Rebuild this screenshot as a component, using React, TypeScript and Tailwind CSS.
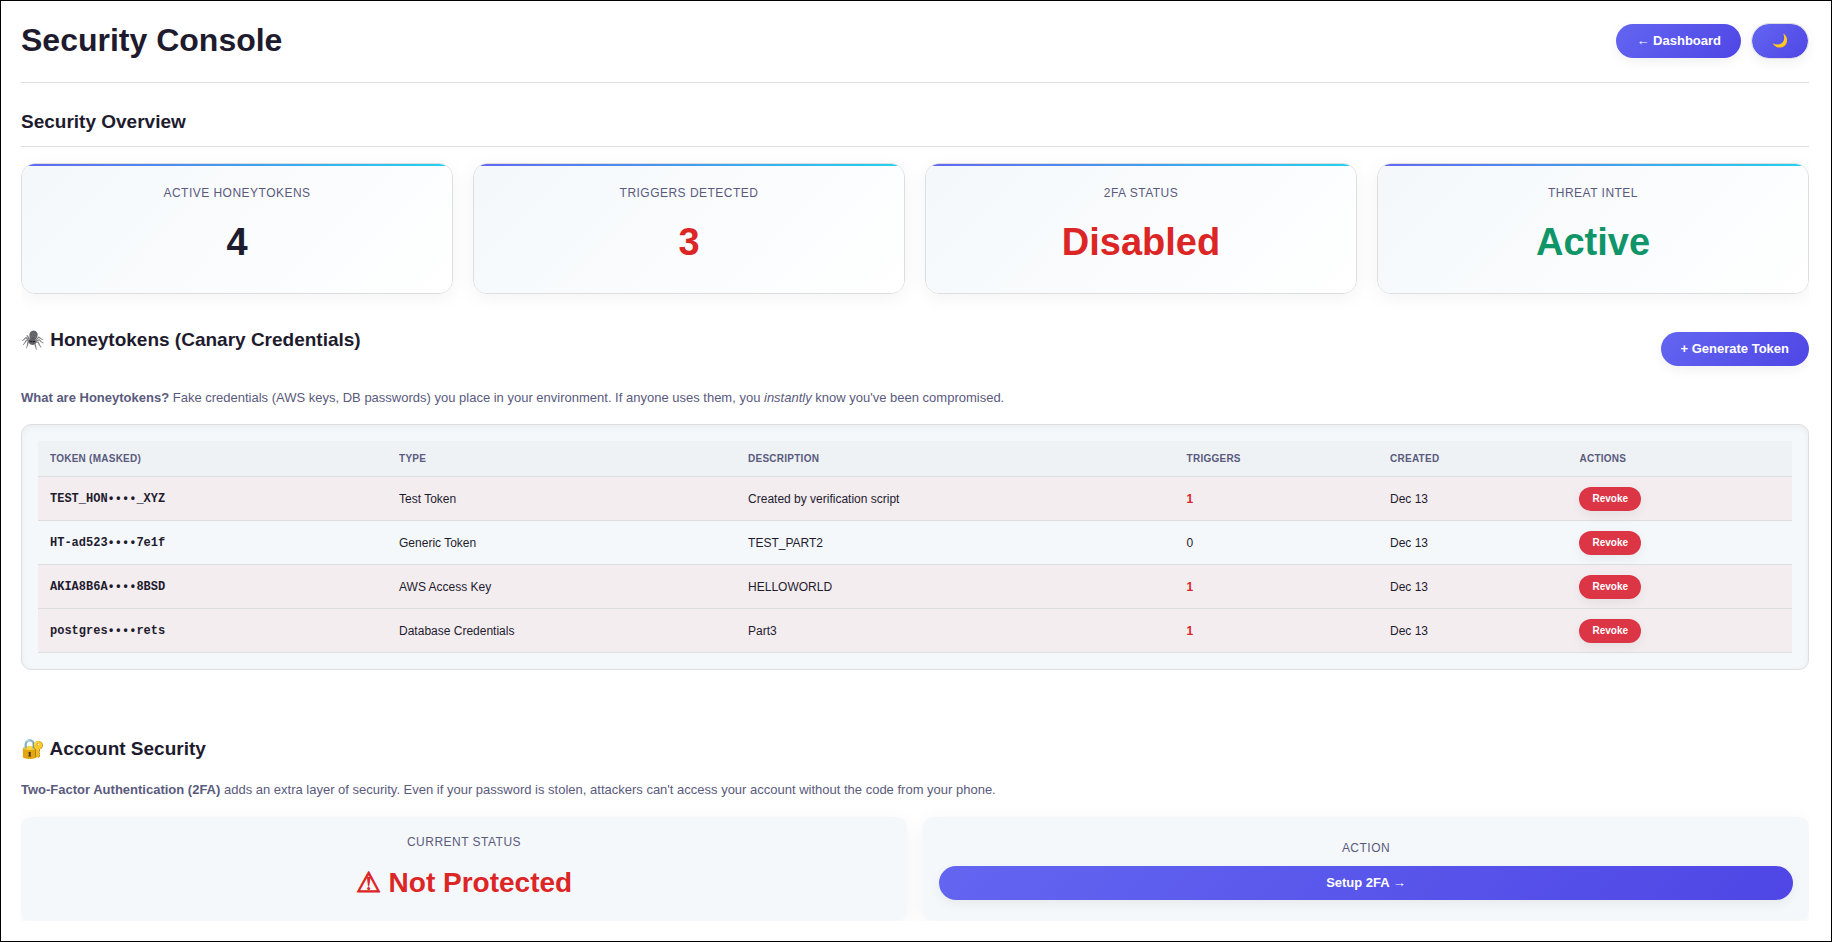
import { clsx } from "clsx";

const STATS = [
  { label: "Active Honeytokens", value: "4", color: "text-[#1e1b2e]" },
  { label: "Triggers Detected", value: "3", color: "text-[#dc2626]" },
  { label: "2FA Status", value: "Disabled", color: "text-[#dc2626]" },
  { label: "Threat Intel", value: "Active", color: "text-[#0f9568]" },
];

const COLUMNS = [
  { label: "Token (Masked)", width: "w-[19.9%]" },
  { label: "Type", width: "w-[19.9%]" },
  { label: "Description", width: "w-[25%]" },
  { label: "Triggers", width: "w-[11.6%]" },
  { label: "Created", width: "w-[10.8%]" },
  { label: "Actions", width: "w-[12.8%]" },
];

const TOKENS = [
  { token: "TEST_HON••••_XYZ", type: "Test Token", description: "Created by verification script", triggers: 1, created: "Dec 13" },
  { token: "HT-ad523••••7e1f", type: "Generic Token", description: "TEST_PART2", triggers: 0, created: "Dec 13" },
  { token: "AKIA8B6A••••8BSD", type: "AWS Access Key", description: "HELLOWORLD", triggers: 1, created: "Dec 13" },
  { token: "postgres••••rets", type: "Database Credentials", description: "Part3", triggers: 1, created: "Dec 13" },
];

const BUTTON =
  "cursor-pointer rounded-full bg-linear-135/srgb from-[#6366f1] to-[#4f46e5] px-5 text-[13px] font-semibold text-white shadow-[0_4px_12px_rgba(0,0,0,0.06)]";

const LABEL = "text-xs uppercase tracking-[0.04em] text-[#5a5a7d]";

const HEADING = "text-[19px] leading-[30px] font-semibold";

export default function App() {
  return (
    <div
      className="min-h-screen border border-black bg-white pr-[22px] pb-[19px] pl-5 text-[#1e1b2e]"
      style={{ fontFamily: '"Liberation Sans", Arial, sans-serif' }}
    >
      <header className="flex items-center justify-between border-b border-[#dedede] py-5">
        <h1 className="pb-[3px] text-[32px] leading-[38px] font-bold">Security Console</h1>
        <div className="flex items-center gap-2.5 pb-0.5">
          <a href="#dashboard" className={clsx(BUTTON, "flex h-[34px] items-center")}>
            ← Dashboard
          </a>
          <button type="button" aria-label="Toggle theme" className={clsx(BUTTON, "h-9 border border-[#dedede] bg-clip-padding")}>
            🌙
          </button>
        </div>
      </header>

      <main className="overflow-hidden pt-6">
        <section>
          <h2 className={clsx(HEADING, "mb-4 border-b border-[#dedede] pb-[9px]")}>Security Overview</h2>
          <div className="grid grid-cols-4 gap-5">
            {STATS.map((s) => (
              <div
                key={s.label}
                className="rounded-[14px] border border-[#dedede] shadow-[0_4px_20px_rgba(0,0,0,0.05)]"
              >
                <div className="relative overflow-hidden rounded-[13px] bg-linear-135/srgb from-[#f4f8fb] to-white py-5 text-center">
                  <div className="absolute inset-x-0 top-0 h-0.5 bg-linear-to-r/srgb from-[#6366f1] to-[#22d3ee]" />
                  <p className={clsx(LABEL, "leading-[18px]")}>{s.label}</p>
                  <p className={clsx("mt-2.5 text-[38px] leading-[61px] font-bold", s.color)}>{s.value}</p>
                </div>
              </div>
            ))}
          </div>
        </section>

        {/* Honeytokens */}
        <section className="mt-[31px]">
          <div className="flex items-center justify-between">
            <h2 className={clsx(HEADING, "mb-[17px]")}>🕷️ Honeytokens (Canary Credentials)</h2>
            <button type="button" className={clsx(BUTTON, "h-[34px]")}>
              + Generate Token
            </button>
          </div>
          <p className="my-4 text-[13px] leading-[20px] text-[#5a5a7d]">
            <strong>What are Honeytokens?</strong> Fake credentials (AWS keys, DB passwords) you place in your
            environment. If anyone uses them, you <em>instantly</em> know you've been compromised.
          </p>

          <div className="rounded-[10px] border border-[#dedede] bg-[#f4f8fb] p-4 shadow-[inset_0_2px_6px_rgba(0,0,0,0.05)]">
            <table className="w-full table-fixed border-separate border-spacing-0 text-left text-xs">
              <thead>
                <tr className="h-9 bg-[#eef2f5]">
                  {COLUMNS.map((c) => (
                    <th
                      key={c.label}
                      className={clsx(
                        "border-b border-[#dedede] px-3 text-[10px] font-semibold tracking-wide text-[#5a5a7d] uppercase",
                        c.width
                      )}
                    >
                      {c.label}
                    </th>
                  ))}
                </tr>
              </thead>
              <tbody className="[&_td]:border-b [&_td]:border-[#dedede] [&_td]:px-3">
                {TOKENS.map((t) => (
                  <tr key={t.token} className={clsx("h-11", t.triggers > 0 && "bg-[#f4edf0]")}>
                    <td className="font-['Liberation_Mono',monospace] font-bold">{t.token}</td>
                    <td>{t.type}</td>
                    <td>{t.description}</td>
                    <td className={clsx(t.triggers > 0 && "font-bold text-[#dc2626]")}>{t.triggers}</td>
                    <td>{t.created}</td>
                    <td>
                      <button
                        type="button"
                        className="block h-6 cursor-pointer rounded-full bg-[#dc3545] px-[13px] text-[10px] font-semibold text-white shadow-[0_4px_12px_rgba(0,0,0,0.06)]"
                      >
                        Revoke
                      </button>
                    </td>
                  </tr>
                ))}
              </tbody>
            </table>
          </div>
        </section>

        {/* Two-factor setup */}
        <section className="mt-16">
          <h2 className={HEADING}>🔐 Account Security</h2>
          <p className="mt-4 mb-[17px] text-[13px] leading-[20px] text-[#5a5a7d]">
            <strong>Two-Factor Authentication (2FA)</strong> adds an extra layer of security. Even if your password is
            stolen, attackers can't access your account without the code from your phone.
          </p>
          <div className="grid grid-cols-2 gap-4 text-center">
            <div className="rounded-[10px] bg-[#f4f8fb] p-4 shadow-[0_4px_20px_rgba(0,0,0,0.05)]">
              <p className={clsx(LABEL, "leading-[18px]")}>Current Status</p>
              <p className="mt-2.5 text-[28px] leading-[44px] font-bold text-[#dc2626]">⚠ Not Protected</p>
            </div>
            <div className="flex flex-col justify-center gap-2 rounded-[10px] bg-[#f4f8fb] p-4 shadow-[0_4px_20px_rgba(0,0,0,0.05)]">
              <p className={clsx(LABEL, "leading-5")}>Action</p>
              <button type="button" className={clsx(BUTTON, "h-[34px]")}>
                Setup 2FA →
              </button>
            </div>
          </div>
        </section>
      </main>
    </div>
  );
}
